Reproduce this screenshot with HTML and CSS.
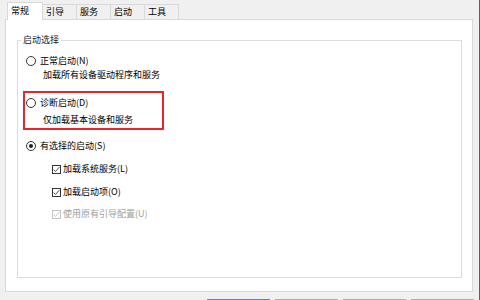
FILE: index.html
```html
<!DOCTYPE html>
<html lang="zh-CN">
<head>
  <meta charset="UTF-8">
  <title>系统配置</title>
  <link rel="stylesheet" href="styles.css">
</head>
<body>
  <div class="screen">
    <div class="dialog">
      <!-- 选项卡 -->
      <div class="tabs">
        <div class="tab active">常规</div>
        <div class="tab">引导</div>
        <div class="tab">服务</div>
        <div class="tab">启动</div>
        <div class="tab">工具</div>
      </div>

      <div class="panel">
        <fieldset class="group">
          <legend>启动选择</legend>
          <div class="options">
            <div class="item">
              <div class="option"><span class="radio"></span>正常启动(N)</div>
              <div class="desc">加载所有设备驱动程序和服务</div>
            </div>

            <div class="item highlight">
              <div class="option"><span class="radio"></span>诊断启动(D)</div>
              <div class="desc desc-gap">仅加载基本设备和服务</div>
            </div>

            <div class="item item-sel">
              <div class="option"><span class="radio checked"></span>有选择的启动(S)</div>
            </div>

            <div class="checks">
              <div class="check-row first">
                <span class="check"><svg viewBox="0 0 9 9" width="7" height="7"><path d="M0.8 4.6 L3.2 7 L8.2 1.4" fill="none" stroke="#222" stroke-width="1"/></svg></span>加载系统服务(L)
              </div>
              <div class="check-row">
                <span class="check"><svg viewBox="0 0 9 9" width="7" height="7"><path d="M0.8 4.6 L3.2 7 L8.2 1.4" fill="none" stroke="#222" stroke-width="1"/></svg></span>加载启动项(O)
              </div>
              <div class="check-row disabled">
                <span class="check"><svg viewBox="0 0 9 9" width="7" height="7"><path d="M0.8 4.6 L3.2 7 L8.2 1.4" fill="none" stroke="#b5b5b5" stroke-width="1"/></svg></span>使用原有引导配置(U)
              </div>
            </div>
          </div>
        </fieldset>
      </div>

      <!-- 按钮只露出顶边，文字在窗口外 -->
      <div class="buttons">
        <button class="btn default" aria-label="确定"></button>
        <button class="btn" aria-label="取消"></button>
        <button class="btn" aria-label="应用"></button>
        <button class="btn" aria-label="帮助"></button>
      </div>
    </div>
    <div class="edge"></div>
  </div>
</body>
</html>
```

FILE: styles.css
```css
body {
  margin: 0;
  background: #f0f0f0;
  font-family: "Noto Sans CJK SC", "Microsoft YaHei", sans-serif;
  font-size: 9px;
  color: #000;
}
.screen {
  display: flex;
  height: 300px;
  overflow: hidden;
}
.dialog {
  width: 479px;
  box-sizing: border-box;
  padding: 0 6px 0 5px;
}
.edge {
  width: 1px;
  background: #4f6179;
}

/* 选项卡 */
.tabs {
  display: flex;
  align-items: flex-end;
  height: 19px;
  padding-left: 2px;
}
.tab {
  height: 14px;
  line-height: 14px;
  padding: 0 12px 0 3px;
  border: 1px solid #d9d9d9;
  border-bottom: none;
  margin-left: -1px;
  background: #f0f0f0;
  white-space: nowrap;
}
.tab.active {
  height: 16px;
  padding: 1px 13px 0 3px;
  margin-left: 0;
  margin-bottom: -1px;
  background: #fff;
  position: relative;
  z-index: 1;
}

/* 面板 */
.panel {
  height: 273px;
  box-sizing: border-box;
  border: 1px solid #d9d9d9;
  background: #fff;
  padding: 14px 10px 13px 11px;
  display: flex;
  flex-direction: column;
}
.group {
  flex: 1;
  margin: 0;
  padding: 0;
  min-width: 0;
  border: 1px solid #dcdcdc;
}
.group legend {
  margin-left: 3px;
  padding: 0 2px;
  line-height: 12px;
  color: #222;
}
.options {
  padding-left: 5px;
}
.item {
  margin-left: 3px;
  margin-top: 8px;
}
.highlight {
  margin-left: 0;
  margin-top: 9px;
  width: 141px;
  box-sizing: border-box;
  border: 2px solid #e8262a;
  padding: 3px 0 1px 1px;
}
.item-sel {
  margin-top: 9px;
}
.option {
  display: flex;
  align-items: center;
  gap: 4px;
  height: 14px;
  line-height: 14px;
}
.desc {
  padding-left: 17px;
  height: 14px;
  line-height: 14px;
}
.desc-gap {
  margin-top: 3px;
}
.radio {
  width: 10px;
  height: 10px;
  box-sizing: border-box;
  border: 1px solid #333;
  border-radius: 50%;
  display: flex;
  align-items: center;
  justify-content: center;
  flex: none;
}
.radio.checked::after {
  content: "";
  width: 4px;
  height: 4px;
  border-radius: 50%;
  background: #222;
}

/* 复选框 */
.checks {
  padding-left: 29px;
}
.check-row {
  display: flex;
  align-items: center;
  gap: 2px;
  height: 14px;
  line-height: 14px;
  margin-top: 9px;
}
.check-row.disabled {
  margin-top: 8px;
  color: #a0a0a0;
}
.check {
  width: 9px;
  height: 9px;
  box-sizing: border-box;
  border: 1px solid #333;
  display: flex;
  align-items: center;
  justify-content: center;
  flex: none;
}
.disabled .check {
  border-color: #c4c4c4;
}

/* 底部按钮 */
.buttons {
  display: flex;
  justify-content: flex-end;
  gap: 5px;
  margin-top: 7px;
  margin-right: -1px;
}
.btn {
  width: 63px;
  height: 21px;
  border: 1px solid #adadad;
  background: #e1e1e1;
  padding: 0;
}
.btn.default {
  border-color: #3f8fd2;
}
```
